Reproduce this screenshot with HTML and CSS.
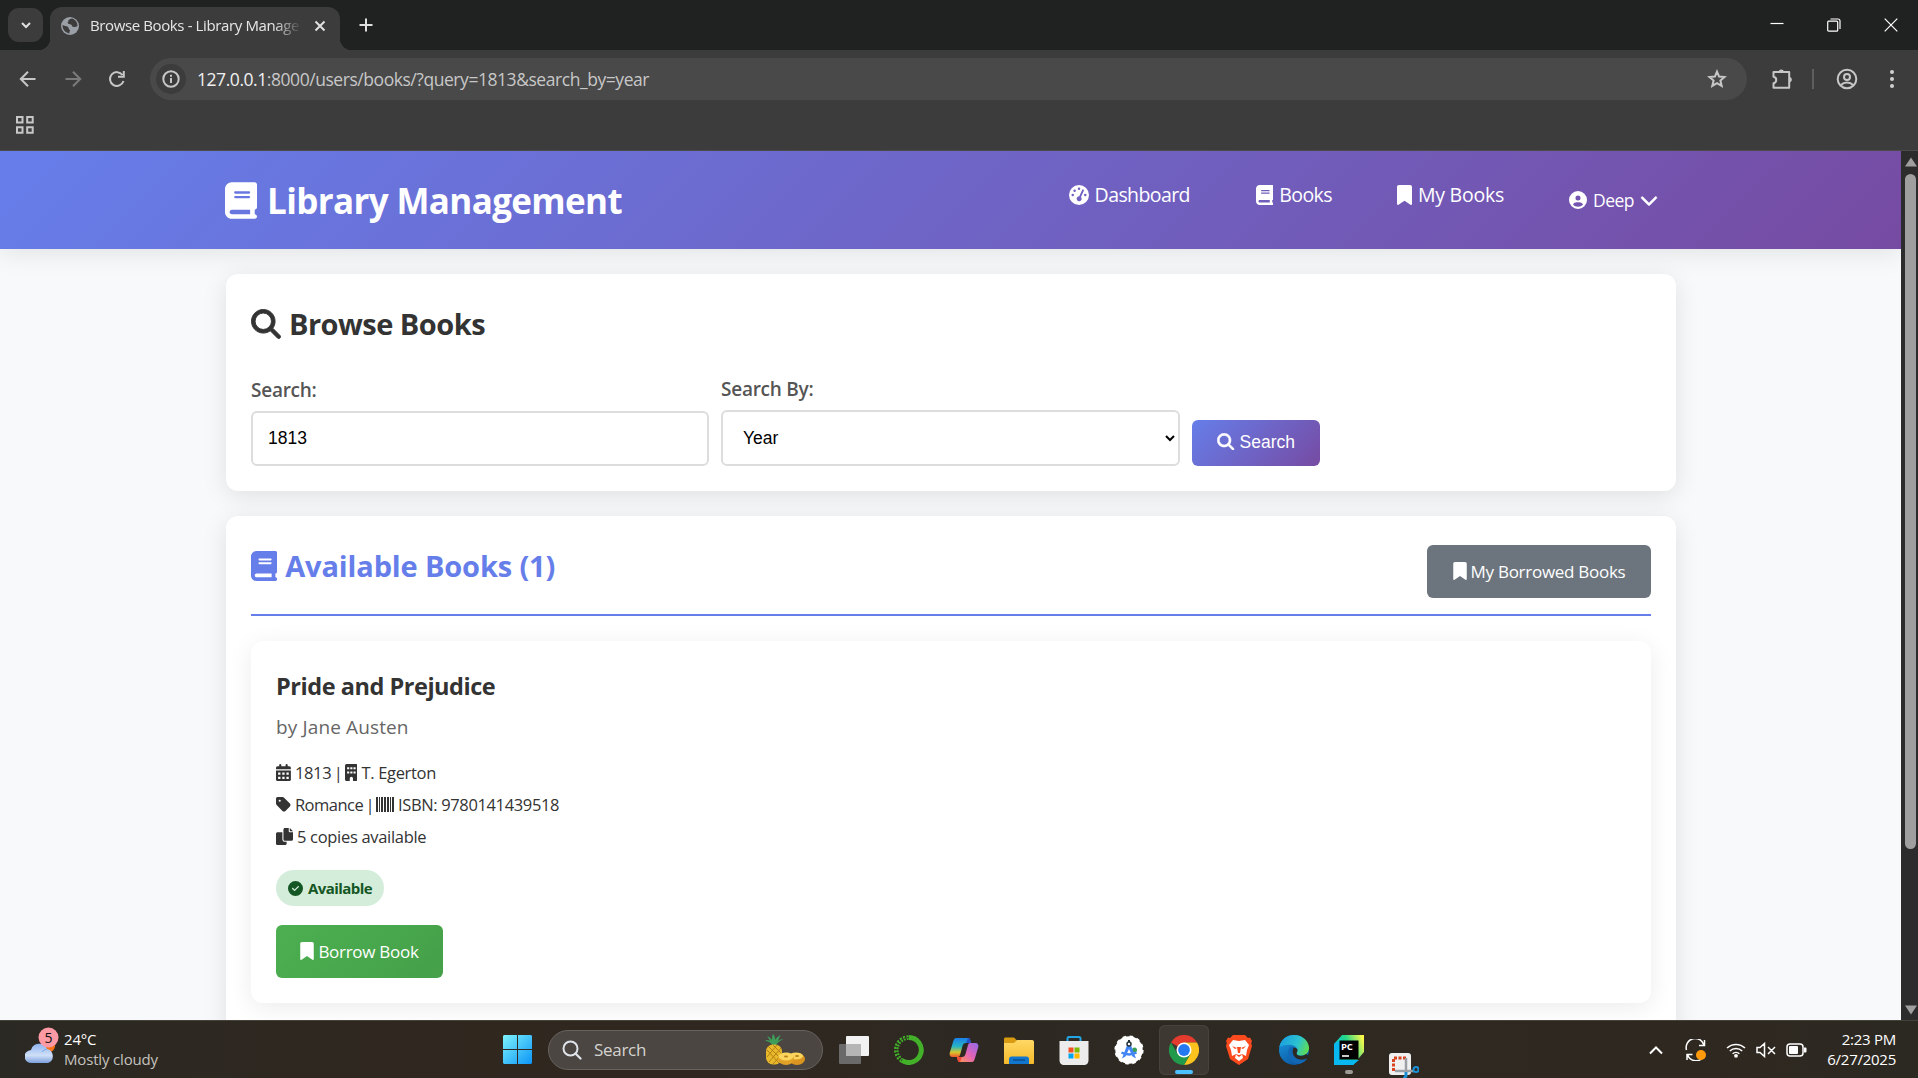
FILE: index.html
```html
<!DOCTYPE html>
<html lang="en">
<head>
<meta charset="utf-8">
<title>Browse Books - Library Management</title>
<link rel="stylesheet" href="styles.css">
</head>
<body>
<svg class="sprite" aria-hidden="true">
  <symbol id="book" viewBox="0 0 448 512"><path d="M96 0C43 0 0 43 0 96V416c0 53 43 96 96 96H384h32c17.7 0 32-14.3 32-32s-14.3-32-32-32V384c17.7 0 32-14.3 32-32V32c0-17.7-14.3-32-32-32H384 96zm0 384H352v64H96c-17.7 0-32-14.3-32-32s14.3-32 32-32zm32-240c0-8.8 7.2-16 16-16H336c8.800 0 16 7.200 16 16s-7.200 16-16 16H144c-8.800 0-16-7.200-16-16zm16 48H336c8.800 0 16 7.200 16 16s-7.200 16-16 16H144c-8.800 0-16-7.200-16-16s7.200-16 16-16z"/></symbol>
  <symbol id="bookmark" viewBox="0 0 384 512"><path d="M0 48V487.700C0 501.100 10.900 512 24.300 512c5 0 9.900-1.500 14-4.400L192 400 345.700 507.600c4.100 2.900 9 4.400 14 4.400c13.400 0 24.300-10.900 24.300-24.300V48c0-26.500-21.500-48-48-48H48C21.500 0 0 21.500 0 48z"/></symbol>
  <symbol id="search" viewBox="-8 -8 528 528"><path stroke="currentColor" stroke-width="16" d="M416 208c0 45.900-14.900 88.300-40 122.700L502.600 457.400c12.500 12.500 12.500 32.800 0 45.300s-32.800 12.500-45.300 0L330.700 376c-34.400 25.200-76.800 40-122.700 40C93.100 416 0 322.900 0 208S93.100 0 208 0S416 93.100 416 208zM208 352a144 144 0 1 0 0-288 144 144 0 1 0 0 288z"/></symbol>
  <symbol id="check" viewBox="0 0 512 512"><path d="M256 512A256 256 0 1 0 256 0a256 256 0 1 0 0 512zM369 209L241 337c-9.400 9.400-24.600 9.400-33.900 0l-64-64c-9.400-9.400-9.400-24.600 0-33.900s24.600-9.400 33.900 0l47 47L335 175c9.400-9.400 24.600-9.400 33.900 0s9.400 24.600 0 33.900z"/></symbol>
  <symbol id="user" viewBox="0 0 512 512"><path d="M399 384.200C376.900 345.800 335.400 320 288 320H224c-47.400 0-88.900 25.800-111 64.200c35.200 39.200 86.200 63.800 143 63.800s107.800-24.700 143-63.800zM0 256a256 256 0 1 1 512 0A256 256 0 1 1 0 256zm256 16a72 72 0 1 0 0-144 72 72 0 1 0 0 144z"/></symbol>
  <symbol id="chevron" viewBox="0 0 512 512"><path stroke="currentColor" stroke-width="14" d="M233.400 406.600c12.500 12.500 32.800 12.500 45.300 0l192-192c12.500-12.500 12.500-32.800 0-45.300s-32.800-12.500-45.300 0L256 338.700 86.600 169.400c-12.500-12.500-32.800-12.500-45.300 0s-12.500 32.800 0 45.300l192 192z"/></symbol>
  <symbol id="tag" viewBox="0 0 448 512"><path d="M0 80V229.500c0 17 6.700 33.300 18.700 45.300l176 176c25 25 65.500 25 90.500 0L418.700 317.300c25-25 25-65.500 0-90.500l-176-176c-12-12-28.300-18.700-45.300-18.700H48C21.500 32 0 53.500 0 80zm112 32a32 32 0 1 1 0 64 32 32 0 1 1 0-64z"/></symbol>
  <symbol id="copy" viewBox="0 0 512 512"><path d="M272 0H384v96c0 17.700 14.300 32 32 32h96V336c0 26.500-21.500 48-48 48H272c-26.500 0-48-21.500-48-48V48c0-26.500 21.500-48 48-48zM416 0l96 96H416zM48 128H192v208c0 44.200 35.800 80 80 80h48v48c0 26.500-21.500 48-48 48H48c-26.500 0-48-21.500-48-48V176c0-26.500 21.500-48 48-48z"/></symbol>
  <symbol id="calendar" viewBox="0 0 448 512"><path fill-rule="evenodd" d="M96 32a32 32 0 0 1 64 0v32h128V32a32 32 0 0 1 64 0v32h48a48 48 0 0 1 48 48v48H0v-48a48 48 0 0 1 48-48h48zM0 192h448v272a48 48 0 0 1-48 48H48a48 48 0 0 1-48-48zM64 256v64h70v-64zM189 256v64h70v-64zM314 256v64h70v-64zM64 384v64h70v-64zM189 384v64h70v-64zM314 384v64h70v-64z"/></symbol>
  <symbol id="building" viewBox="0 0 384 512"><path fill-rule="evenodd" d="M48 0h288a48 48 0 0 1 48 48v416a48 48 0 0 1-48 48h-96v-80a48 48 0 0 0-96 0v80H48a48 48 0 0 1-48-48V48A48 48 0 0 1 48 0zM64 96v64h64V96zM160 96v64h64V96zM256 96v64h64V96zM64 224v64h64v-64zM160 224v64h64v-64zM256 224v64h64v-64z"/></symbol>
  <symbol id="barcode" viewBox="0 0 18 17"><path d="M0 1h2v15H0zM3 1h1v15H3zM5 1h2v15H5zM8 1h2v15H8zM11 1h2v15h-2zM14 1h1v15h-1zM16 1h2v15h-2z"/></symbol>
  <symbol id="gauge" viewBox="0 0 512 512"><path fill-rule="evenodd" d="M256 0a256 256 0 1 1 0 512a256 256 0 1 1 0-512zM256 64a32 32 0 1 0 0 64a32 32 0 1 0 0-64zM144 112a32 32 0 1 0 0 64a32 32 0 1 0 0-64zM96 224a32 32 0 1 0 0 64a32 32 0 1 0 0-64zM416 224a32 32 0 1 0 0 64a32 32 0 1 0 0-64zM381 144a24 24 0 0 0-44-19l-75 163a64 64 0 1 0 44 20z"/></symbol>
</svg>

<header class="browser">
  <div class="tabstrip">
    <button class="tab-menu"><svg width="12" height="12" viewBox="0 0 12 12"><path d="M2 4l4 4 4-4" class="ln w2"/></svg></button>
    <div class="tab">
      <svg class="globe" width="18" height="18" viewBox="0 0 18 18"><circle cx="9" cy="9" r="9" fill="#9aa0a6"/><path d="M11 1.500c-3 .5-4 1.500-3.500 3C6 5 6.500 6.500 8 7c2 .5 3 .5 3 2.500 1.500 0 1.500 1 3 .5 1-.5 2-.5 2.500-1C16.500 5 14 2.200 11 1.500zM1.500 8c1.500 1 4 .8 5.500 2 1 1 .5 2.500 2 3 0 1.500-1 2-.5 3.400C4.500 16 1.400 12.500 1.500 8z" fill="#3c3c3c"/></svg>
      <span class="tab-title">Browse Books - Library Manage</span>
      <svg class="tab-close" width="12" height="12" viewBox="0 0 12 12"><path d="M1.500 1.500l9 9M10.500 1.500l-9 9" class="ln w2"/></svg>
    </div>
    <svg class="plus" width="14" height="14" viewBox="0 0 14 14"><path d="M7 .5v13M.5 7h13" class="ln w2"/></svg>
    <div class="window-buttons">
      <svg width="14" height="14" viewBox="0 0 14 14"><path d="M.5 5.500h13" class="ln wh"/></svg>
      <svg width="14" height="14" viewBox="0 0 14 14"><rect x=".7" y="3.200" width="10" height="10" rx="1" class="ln wh"/><path d="M3.500 1h7.500a2 2 0 0 1 2 2v8" class="ln wh"/></svg>
      <svg width="14" height="14" viewBox="0 0 14 14"><path d="M.7.7l12.600 12.600M13.300.7L.7 13.300" class="ln wh"/></svg>
    </div>
  </div>
  <div class="toolbar">
    <div class="nav-buttons">
      <svg width="18" height="18" viewBox="0 0 18 18"><path d="M16.500 9H2M9 1.800L1.800 9 9 16.200" class="ln w2"/></svg>
      <svg class="dim" width="18" height="18" viewBox="0 0 18 18"><path d="M1.500 9H16M9 1.800L16.200 9 9 16.200" class="ln w2"/></svg>
      <svg width="18" height="18" viewBox="0 0 18 18"><path d="M15.500 11A6.900 6.900 0 1 1 14.500 5M15.800 1v5.800H10" class="ln w2"/></svg>
    </div>
    <div class="omnibox">
      <span class="site-info"><svg width="18" height="18" viewBox="0 0 18 18"><circle cx="9" cy="9" r="7.700" class="ln w2"/><path d="M9 8v5M9 4.800v1.900" class="ln w2"/></svg></span>
      <span class="url"><b>127.0.0.1</b>:8000/users/books/?query=1813&amp;search_by=year</span>
      <svg class="star" width="20" height="20" viewBox="0 0 20 20"><path d="M10 2.600l2.100 5 5.400.5-4.100 3.500 1.300 5.300-4.700-2.800-4.700 2.800 1.300-5.300L2.500 8.100l5.400-.5z" class="ln w2"/></svg>
    </div>
    <svg class="ext" width="22" height="22" viewBox="0 0 22 22"><path d="M2.500 4h15.700v15.700H2.500v-4.500a3.300 3.300 0 0 0 0-6.500z" class="ln w2" stroke-linejoin="round"/><path d="M7.700 4a2.600 2.600 0 0 1 5.200 0zM18.200 9a2.600 2.600 0 0 1 0 5.200z" fill="#c7c7c7"/></svg>
    <i class="sep"></i>
    <svg class="profile" width="22" height="22" viewBox="0 0 22 22"><circle cx="11" cy="11" r="9.300" class="ln w2"/><circle cx="11" cy="9" r="3" class="ln w2"/><path d="M5 17c3-3.300 9-3.300 12 0" class="ln w2"/></svg>
    <svg class="dots" width="6" height="20" viewBox="0 0 6 20"><g fill="#d0d0d0"><circle cx="3" cy="3" r="2"/><circle cx="3" cy="10" r="2"/><circle cx="3" cy="17" r="2"/></g></svg>
  </div>
  <div class="bookmarks"><svg width="20" height="20" viewBox="0 0 20 20"><path d="M2 2h5.500v5.500H2zM12.200 2h5.500v5.500h-5.500zM2 12.200h5.500v5.500H2zM12.200 12.200h5.500v5.500h-5.500z" class="ln w2"/></svg></div>
</header>

<div class="viewport">
  <div class="page">
    <div class="site-header">
      <div class="brand"><svg class="ic"><use href="#book"/></svg>Library Management</div>
      <nav class="menu">
        <a class="link dashboard"><svg class="ic sq"><use href="#gauge"/></svg>Dashboard</a>
        <a class="link books"><svg class="ic"><use href="#book"/></svg>Books</a>
        <a class="link mine"><svg class="ic bm"><use href="#bookmark"/></svg>My Books</a>
        <a class="link account"><svg class="ic sq"><use href="#user"/></svg>Deep<svg class="ic sq"><use href="#chevron"/></svg></a>
      </nav>
    </div>
    <main class="container">
      <section class="card search-card">
        <h2 class="heading"><svg class="ic sq"><use href="#search"/></svg>Browse Books</h2>
        <form class="search-form">
          <label class="field"><span class="label">Search:</span><input type="text" value="1813"></label>
          <label class="field by"><span class="label">Search By:</span><select><option>Year</option></select></label>
          <button type="button" class="btn-search"><svg class="ic sq"><use href="#search"/></svg>Search</button>
        </form>
      </section>
      <section class="card list-card">
        <div class="list-head">
          <h3 class="list-title"><svg class="ic"><use href="#book"/></svg>Available Books (1)</h3>
          <a class="btn btn-gray"><svg class="ic bm"><use href="#bookmark"/></svg>My Borrowed Books</a>
        </div>
        <article class="book">
          <h4 class="book-title">Pride and Prejudice</h4>
          <p class="author">by Jane Austen</p>
          <div class="meta">
            <p><svg class="ic"><use href="#calendar"/></svg><span>1813 <i class="bar">|</i></span><svg class="ic bm"><use href="#building"/></svg><span>T. Egerton</span></p>
            <p><svg class="ic"><use href="#tag"/></svg><span class="genre">Romance <i class="bar">|</i></span><svg class="ic barcode"><use href="#barcode"/></svg><span class="isbn">ISBN: 9780141439518</span></p>
            <p><svg class="ic sq"><use href="#copy"/></svg><span>5 copies available</span></p>
          </div>
          <span class="badge"><svg class="ic sq"><use href="#check"/></svg>Available</span>
          <a class="btn btn-green"><svg class="ic bm"><use href="#bookmark"/></svg>Borrow Book</a>
        </article>
      </section>
    </main>
  </div>
  <div class="scrollbar">
    <svg width="14" height="10" viewBox="0 0 14 10"><path d="M7 .5l6 9H1z"/></svg>
    <i class="thumb"></i>
    <svg class="down" width="14" height="10" viewBox="0 0 14 10"><path d="M7 9.500l6-9H1z"/></svg>
  </div>
</div>

<footer class="taskbar">
  <div class="weather">
    <svg width="34" height="40" viewBox="0 0 34 40"><defs><linearGradient id="cl" x1="0" y1="0" x2="0" y2="1"><stop offset="0" stop-color="#8fb4f0"/><stop offset=".6" stop-color="#cfe0f8"/><stop offset="1" stop-color="#7d9fdc"/></linearGradient></defs><circle cx="24" cy="19" r="6" fill="#f97316"/><path d="M7 36a7 6.500 0 0 1-1-13 8.500 8.500 0 0 1 16-1 7.300 7.300 0 0 1 1 14z" fill="url(#cl)"/><path d="M17 25a8 8 0 0 1 5-3" stroke="#7fa5e6" fill="none"/><circle cx="23.500" cy="10.500" r="10" fill="#ff99a4"/><text x="23.500" y="15.500" text-anchor="middle" font-size="14" fill="#111">5</text></svg>
    <div class="two"><div>24°C</div><div class="soft">Mostly cloudy</div></div>
  </div>
  <div class="dock">
    <svg class="start" width="29" height="29" viewBox="0 0 29 29"><defs><linearGradient id="wn" x1="0" y1="0" x2="1" y2="1"><stop offset="0" stop-color="#7df3fc"/><stop offset="1" stop-color="#0c95f6"/></linearGradient></defs><path d="M1 0h13v14H0V1zM15 0h13l1 1v13H15zM0 15h14v14H1l-1-1zM15 15h14v13l-1 1H15z" fill="url(#wn)"/></svg>
    <div class="task-search">
      <svg width="20" height="20" viewBox="0 0 20 20"><circle cx="8.500" cy="8.500" r="7" fill="none" stroke="#dfe3ea" stroke-width="2"/><path d="M13.500 13.500l5 5" stroke="#dfe3ea" stroke-width="2.300" stroke-linecap="round"/></svg>
      <span>Search</span>
      <svg class="fruit" width="42" height="32" viewBox="0 0 42 32"><path d="M9 12C7 8 4 8 1 6c3 0 4 0 5 1C5 5 4 3 3 2c3 1 4 3 5 4 0-2 0-4 1-6 2 2 2 4 2 6 1-2 3-4 6-5-2 2-2 4-3 6 1-1 3-2 5-2-2 2-5 2-7 7z" fill="#3f9d5a"/><rect x="2" y="10.500" width="16" height="20" rx="7" fill="#e9b92c"/><path d="M3 16l12 13M4 12l13 13M9 11l9 9M17 14L5 28M13 11L3 23M18 20l-9 10" stroke="#b47f14" stroke-width="1"/><ellipse cx="33" cy="25" rx="8" ry="6" fill="#d99520"/><ellipse cx="32" cy="22" rx="7" ry="3.500" fill="#fbd55c"/><ellipse cx="22" cy="25" rx="8" ry="6" fill="#e0a126"/><ellipse cx="22" cy="22.500" rx="7.500" ry="4" fill="#fbd55c"/><ellipse cx="22" cy="22.500" rx="2" ry="1" fill="#b8801b"/><ellipse cx="33" cy="22" rx="2" ry="1" fill="#b8801b"/></svg>
    </div>
    <div class="apps">
      <span class="app"><svg width="30" height="30" viewBox="0 0 30 30"><rect x="0" y="9" width="22" height="20" rx="1" fill="#6a6a6a"/><rect x="7" y="1" width="23" height="20" rx="1" fill="#f2f2f2"/><path d="M7 9h15v12H7z" fill="#b5b5b5"/></svg></span>
      <span class="app"><svg width="30" height="30" viewBox="0 0 30 30"><path d="M15 2.500a12.500 12.500 0 1 1-7 23" fill="none" stroke="#43b02a" stroke-width="5"/><path d="M8 25.500A12.500 12.500 0 0 1 15 2.500" fill="none" stroke="#43b02a" stroke-width="4.500" stroke-dasharray="2 1.300"/><path d="M8 25.500A12.500 12.500 0 0 1 15 2.500" fill="none" stroke="#2d2822" stroke-width="1" stroke-dasharray="1.500 1.500"/></svg></span>
      <span class="app"><svg width="30" height="30" viewBox="0 0 30 30"><defs><linearGradient id="c1" x1="0" y1="0" x2="0" y2="1"><stop offset="0" stop-color="#1b7fe8"/><stop offset=".45" stop-color="#27b5c4"/><stop offset=".75" stop-color="#d4c92c"/><stop offset="1" stop-color="#f3562e"/></linearGradient><linearGradient id="c2" x1="1" y1="0" x2="0" y2="1"><stop offset="0" stop-color="#8d6be8"/><stop offset=".5" stop-color="#e263b9"/><stop offset="1" stop-color="#ff9a4a"/></linearGradient></defs><path d="M7 3h12c2 0 2 1 3 5h-5c-2 0-3 1-3.500 3L11 20c-.7 2-1.500 2-4 2H4c-3 0-4-2-3-5l3-10c1-3 1.500-4 3-4z" fill="url(#c1)"/><path d="M23 27H11c-2 0-2-1-3-5h5c2 0 3-1 3.500-3L19 10c.7-2 1.500-2 4-2h3c3 0 4 2 3 5l-3 10c-1 3-1.500 4-3 4z" fill="url(#c2)"/><path d="M19 3c2 0 2 1 3 5h-5z" fill="#2650c8"/><path d="M8 22h5l-2 5c-2 0-2-1-3-5z" fill="#f04a37"/></svg></span>
      <span class="app"><svg width="30" height="30" viewBox="0 0 30 30"><defs><linearGradient id="fo" x1="0" y1="0" x2="0" y2="1"><stop offset="0" stop-color="#ffd865"/><stop offset="1" stop-color="#f5b92a"/></linearGradient></defs><path d="M0 4c0-1 .5-1.500 1.500-1.500H10l3 3v6H0z" fill="#d99b11"/><path d="M0 8h10l3-3h15c1.300 0 2 .7 2 2v21c0 .6-.4 1-1 1H1c-.6 0-1-.4-1-1z" fill="url(#fo)"/><path d="M5 29v-5c0-1.500 1-2.500 2.500-2.500h15c1.500 0 2.500 1 2.500 2.500v5z" fill="#1277cc"/><path d="M9 25h12" stroke="#0b4f92" stroke-width="1.500"/></svg></span>
      <span class="app"><svg width="30" height="30" viewBox="0 0 30 30"><path d="M8.500 6V3.500C8.500 2.500 9 2 10 2h10c1 0 1.500.5 1.500 1.500V6" fill="none" stroke="#22a5e4" stroke-width="2"/><path d="M.5 6h29v19c0 3-1.500 5-5 5h-19c-3.500 0-5-2-5-5z" fill="#ececec"/><path d="M9.500 12.500h5v5h-5z" fill="#f25022"/><path d="M15.500 12.500h5v5h-5z" fill="#7fba00"/><path d="M9.500 18.500h5v5h-5z" fill="#00a4ef"/><path d="M15.500 18.500h5v5h-5z" fill="#ffb900"/></svg></span>
      <span class="app"><svg width="30" height="30" viewBox="0 0 30 30"><circle cx="15" cy="15" r="13.700" fill="#fff"/><circle cx="15" cy="15" r="13.700" fill="none" stroke="#fff" stroke-width="1.800" stroke-dasharray="3.600 3.600"/><circle cx="20.500" cy="15" r="2.500" fill="#3a9e56"/><path d="M13.500 9h3l5.500 14.500-3.500-2L15 14l-3.500 7.500-3.500 2z" fill="#4285f4"/><path d="M7.500 17.500c4 2.500 11 2.500 15 0" fill="none" stroke="#4285f4" stroke-width="2.500"/><circle cx="15" cy="9" r="2" fill="#fff" stroke="#263238" stroke-width="1.500"/><path d="M15 5v2" stroke="#263238" stroke-width="2"/></svg></span>
      <span class="app active"><svg width="30" height="30" viewBox="0 0 30 30"><path d="M15 15L2 7.500A15 15 0 0 1 28 7.500H15z" fill="#e33b2e"/><path d="M15 15V7.500h13A15 15 0 0 1 15 30l6.500-11.200z" fill="#fcc31e"/><path d="M15 15l6.500 3.800L15 30A15 15 0 0 1 2 7.500l6.500 11.300z" fill="#219a4b"/><circle cx="15" cy="15" r="7.500" fill="#fff"/><circle cx="15" cy="15" r="5.900" fill="#2478f2"/></svg><i class="run"></i></span>
      <span class="app"><svg width="30" height="30" viewBox="0 0 30 30"><path d="M9 0h12l3 3 2-.5L28 6l-.8 2 .8 3-4 13-9 6-9-6L2 11l.8-3L2 6l2-3.500 2 .5z" fill="#fb4a1d"/><path d="M9 5l6 1 6-1 4 5-2 5-1 6-4-2 1 4-4 3-4-3 1-4-4 2-1-6-2-5z" fill="#fff"/><path d="M8 11l5 2-2 1zM22 11l-5 2 2 1zM13 12h4l-1 6h-2zM11 19l4 3 4-3-4 1z" fill="#fb4a1d"/></svg></span>
      <span class="app"><svg width="30" height="30" viewBox="0 0 30 30"><defs><linearGradient id="e1" x1="0" y1=".3" x2="1" y2=".6"><stop offset="0" stop-color="#1a9fe0"/><stop offset=".6" stop-color="#2cc3cf"/><stop offset="1" stop-color="#5fdc52"/></linearGradient><linearGradient id="e2" x1="0" y1="0" x2=".5" y2="1"><stop offset="0" stop-color="#1b9de2"/><stop offset="1" stop-color="#0c59a4"/></linearGradient></defs><circle cx="15" cy="15" r="15" fill="url(#e2)"/><path d="M.3 12C2 4 8 0 15 0c9 0 15 6.500 15 13 0 5-4 7.500-8 7.500-3 0-5-1-4-3 1-1 1-6-5-7.500C8 9 2.500 11 .3 12z" fill="url(#e1)"/><path d="M12 14c-2 6 2 12 9 12 3 0 5-.7 7-2l1.500-3-2-2c-4 3-10 2.500-10-1 0-1 1-1.500 1-3 0-2-5-4-6.500-1z" fill="#2d2822"/><path d="M11 12c-4 5-1 16 9 17 4-1 7-3 8.500-6-3 2-8 2.500-11.500 0-4-3-4-8-2-11z" fill="#1268b5"/></svg></span>
      <span class="app"><svg width="30" height="30" viewBox="0 0 30 30"><defs><linearGradient id="pc" x1="0" y1=".6" x2="1" y2=".2"><stop offset="0" stop-color="#07c3f2"/><stop offset=".5" stop-color="#21d789"/><stop offset="1" stop-color="#fcf84a"/></linearGradient></defs><path d="M8 0h22v17L19 30H0V9z" fill="url(#pc)"/><path d="M0 9l6-3v19h19l-6 5H0z" fill="#07b9f0"/><path d="M5.500 5.500h19v19h-19z" fill="#000"/><path d="M8 21h7" stroke="#fff" stroke-width="1.600"/><text x="7" y="14.500" font-size="9.500" font-weight="700" fill="#fff">PC</text></svg><i class="idle"></i></span>
      <span class="app low"><svg width="30" height="30" viewBox="0 0 30 30"><rect x="0" y="0" width="22" height="22" rx="3" fill="#f0f0f0"/><path d="M4.500 18V5H17" fill="none" stroke="#d9431f" stroke-width="3" stroke-dasharray="3 1.500"/><path d="M17 5v13M6 18h19" stroke="#9aa0a6" stroke-width="2.500"/><circle cx="27" cy="16.500" r="2.500" fill="none" stroke="#1b8fd6" stroke-width="2"/><path d="M17 19v4l-3 4" stroke="#1b8fd6" stroke-width="3" fill="none"/></svg></span>
    </div>
  </div>
  <div class="tray">
    <svg width="16" height="10" viewBox="0 0 16 10"><path d="M2 8.500l6-6 6 6" class="ln wt"/></svg>
    <svg class="sync" width="22" height="22" viewBox="0 0 22 22"><path d="M1.500 11A9 9 0 0 1 19 6M19.500 1v5.500H14M19 17A9 9 0 0 1 2.500 15.500M2 21v-5.500h5.500" class="ln ws"/><circle cx="16" cy="16" r="5" fill="#ff9a0c"/></svg>
    <svg class="wifi" width="20" height="16" viewBox="0 0 20 16"><path d="M1 6a13 13 0 0 1 18 0M3.800 9a9 9 0 0 1 12.400 0M6.600 11.800a5 5 0 0 1 6.800 0" class="ln ws"/><circle cx="10" cy="13.800" r="1.900" fill="#fff"/></svg>
    <svg class="vol" width="20" height="16" viewBox="0 0 20 16"><path d="M1 5.500h3L8.500 1.500v13L4 10.500H1zM12 5l7 7M19 5l-7 7" class="ln ws"/></svg>
    <svg class="bat" width="21" height="14" viewBox="0 0 21 14"><rect x="1" y="1" width="16" height="12" rx="3" class="ln ws"/><rect x="3" y="3" width="9" height="8" rx="1" fill="#fff"/><path d="M18 4.500h1.500c.6 0 1 .5 1 1v3c0 .5-.4 1-1 1H18z" fill="#fff"/></svg>
    <div class="clock"><div>2:23 PM</div><div>6/27/2025</div></div>
  </div>
</footer>
</body>
</html>
```

FILE: styles.css
```css
* { box-sizing: border-box; }
html, body { margin: 0; height: 100%; overflow: hidden; }
body { display: flex; flex-direction: column; width: 1918px; height: 1078px; font-family: "Open Sans", "Noto Sans", sans-serif; color: #333; white-space: nowrap; }
h2, h3, h4, p { margin: 0; }
svg { display: block; flex: none; }
.sprite { position: absolute; width: 0; height: 0; }
.ln { fill: none; stroke: #c7c7c7; stroke-width: 1.5; }
.ln.w2 { stroke-width: 2; }
.ln.wh { stroke: #fff; stroke-width: 1.2; }
.ln.ws { stroke: #fff; stroke-width: 1.5; }
.ln.wt { stroke: #fff; stroke-width: 2; }
.ic { width: .875em; height: 1em; fill: currentColor; }
.ic.sq { width: 1em; }
.ic.bm { width: .75em; }

/* browser chrome */
.browser { flex: none; height: 151px; background: #3c3c3c; border-bottom: 1px solid #4b4b4b; }
.tabstrip { display: flex; height: 50px; padding: 7px 0 0 8px; background: #202221; }
.tab-menu { display: grid; place-items: center; width: 35px; height: 34px; margin: 1px 7px 0 0; padding: 0; border: 0; border-radius: 11px; background: #3c3c3c; }
.tab { position: relative; display: flex; align-items: center; width: 290px; height: 43px; padding: 0 14px 6px 11px; border-radius: 12px 12px 0 0; background: #3c3c3c; }
.tab::before, .tab::after { content: ""; position: absolute; bottom: 0; width: 12px; height: 12px; }
.tab::before { left: -12px; background: radial-gradient(circle at 0 0, transparent 12px, #3c3c3c 12.5px); }
.tab::after { right: -12px; background: radial-gradient(circle at 100% 0, transparent 12px, #3c3c3c 12.5px); }
.tab-title { width: 212px; margin: -1px 0 0 11px; overflow: hidden; font-size: 15px; letter-spacing: -.38px; color: #e6e6e6; mask-image: linear-gradient(90deg, #000 184px, transparent 212px); }
.tab-close { margin-left: auto; }
.tab-close .ln, .tab-menu .ln, .plus .ln { stroke: #e0e0e0; }
.plus { margin: 11px 0 0 19px; }
.window-buttons { display: flex; gap: 43px; margin: 11px 20px 0 auto; }
.toolbar { display: flex; align-items: center; height: 58px; }
.nav-buttons { display: flex; gap: 26.5px; width: 150px; padding-left: 19px; }
.dim { opacity: .45; }
.omnibox { display: flex; align-items: center; width: 1597px; height: 42px; padding: 0 20px 0 6px; border-radius: 21px; background: #494949; }
.site-info { display: grid; place-items: center; width: 30px; height: 30px; border-radius: 50%; background: #3c3c3c; }
.url { margin-left: 11px; font-size: 17.5px; letter-spacing: -.447px; color: #c7c7c7; }
.url b { font-weight: 400; color: #f0f0f0; }
.star { margin-left: auto; }
.ext { margin-left: 24px; }
.sep { width: 2px; height: 20px; margin-left: 19px; background: #5e5e5e; }
.profile { margin-left: 22px; }
.dots { margin-left: 31px; }
.bookmarks { padding: 7px 0 0 15px; }

/* page */
.viewport { display: flex; flex: none; height: 869px; overflow: hidden; }
.page { width: 1901px; background: #f8f9fa; }
.site-header { display: flex; align-items: center; height: 98px; padding: 0 243px 0 225px; background: linear-gradient(135deg, #667eea 0%, #764ba2 100%); box-shadow: 0 3px 25px rgba(0, 0, 0, .1); color: #fff; }
.brand { display: flex; align-items: center; gap: 10px; font-size: 35px; font-weight: 700; letter-spacing: -.64px; }
.brand .ic { width: 32px; height: 37px; }
.menu { display: flex; align-items: center; margin-left: auto; }
.link { display: flex; align-items: center; gap: 6px; padding-bottom: 11px; font-size: 19.5px; letter-spacing: -.6px; }
.link .ic { font-size: 20px; }
.books { margin-left: 66px; }
.mine { margin-left: 65px; letter-spacing: -.25px; }
.account { margin-left: 65px; padding: 0; font-size: 17.5px; letter-spacing: -.5px; }
.account .ic { font-size: 18px; }
.container { width: 1450px; margin: 25px 0 0 226px; }
.card { padding: 25px; border-radius: 12px; background: #fff; box-shadow: 0 5px 25px rgba(0, 0, 0, .1); }
.search-card { height: 217px; margin-bottom: 25px; }
.heading { display: flex; align-items: center; gap: 8px; height: 48px; margin-bottom: 27px; font-size: 29px; font-weight: 700; letter-spacing: -.52px; }
.heading .ic { margin-top: 1px; font-size: 30px; }
.search-form { display: flex; align-items: flex-end; gap: 12px; }
.field { display: block; width: 458px; }
.field.by { width: 459px; }
.label { display: block; height: 28px; margin-bottom: 8px; line-height: 30px; font-size: 19px; font-weight: 600; letter-spacing: -.25px; color: #555; }
.field input, .field select { display: block; width: 100%; height: 55px; padding: 0 15px; border: 2px solid #ddd; border-radius: 6px; background: #fff; color: #000; font: 17.5px "Liberation Sans", Arial, sans-serif; }
.field select { height: 56px; padding: 0 1px 0 16px; }
.btn-search { display: flex; align-items: center; justify-content: center; gap: 5px; width: 128px; height: 46px; padding: 0 0 1px; border: 0; border-radius: 6px; background: linear-gradient(135deg, #667eea, #764ba2); color: #fff; font: 17.5px "Liberation Sans", Arial, sans-serif; }
.btn-search .ic { margin-bottom: 2px; }
.list-card { height: 600px; }
.list-head { display: flex; align-items: flex-start; justify-content: space-between; height: 75px; margin-bottom: 25px; padding-top: 4px; border-bottom: 2px solid #667eea; }
.list-title { display: flex; align-items: center; gap: 8px; height: 41px; color: #667eea; font-size: 29px; font-weight: 700; letter-spacing: -.141px; }
.list-title .ic { font-size: 30px; }
.btn { display: flex; align-items: center; justify-content: center; gap: 4px; height: 53px; padding-bottom: 1px; border-radius: 6px; color: #fff; font-size: 17px; letter-spacing: -.28px; }
.btn .ic { width: 14px; height: 18px; }
.btn-gray { width: 224px; background: #6c757d; }
.btn-green { width: 167px; background: linear-gradient(135deg, #4caf50, #45a049); }
.book { height: 362px; padding: 25px; border-radius: 12px; box-shadow: 0 5px 25px rgba(0, 0, 0, .08); }
.book-title { height: 40px; line-height: 40px; font-size: 23.5px; font-weight: 700; letter-spacing: -.46px; }
.author { height: 41px; line-height: 42px; color: #666; font-size: 19px; letter-spacing: .13px; }
.meta { margin: 9px 0 18px; font-size: 16.5px; letter-spacing: -.31px; }
.meta p { display: flex; align-items: center; gap: 4px; height: 32px; }
.meta .ic { font-size: 17px; }
.meta .ic.barcode { width: 18px; height: 17px; shape-rendering: crispEdges; }
.genre { letter-spacing: -.5px; }
.isbn { letter-spacing: -.37px; }
.bar { margin: 0 -2px 0 -1.5px; font-style: normal; }
.badge { display: flex; align-items: center; justify-content: center; gap: 5px; width: 108px; height: 36px; margin-bottom: 19px; border-radius: 18px; background: #d4edda; color: #155724; font-size: 15px; font-weight: 700; letter-spacing: -.566px; }
.scrollbar { display: flex; flex-direction: column; align-items: center; width: 17px; padding: 6px 0 5px 2px; background: #2c2c2c; fill: #9f9f9f; }
.thumb { width: 11px; height: 675px; margin-top: 7px; border-radius: 6px; background: #9f9f9f; }
.down { margin-top: auto; }

/* taskbar */
.taskbar { display: flex; flex: none; height: 58px; border-top: 1px solid #454239; background: linear-gradient(90deg, #2b2923, #30271f 25%, #302720 38%, #2d2922 50%, #2f2820 90%, #2b2922); color: #fff; font-size: 15px; letter-spacing: -.17px; overflow: hidden; }
.weather { display: flex; width: 503px; padding: 6px 0 0 25px; gap: 5px; line-height: 20px; }
.two { padding-top: 2px; }
.soft { color: #c5c2be; }
.dock { display: flex; align-items: center; }
.start { margin-right: 16px; }
.task-search { display: flex; align-items: center; width: 275px; height: 40px; padding: 0 16px 0 13px; border: 1px solid #67625e; border-radius: 20px; background: #4b4641; color: #d5d3d0; font-size: 17px; letter-spacing: -.3px; }
.task-search span { margin-left: 12px; }
.fruit { margin-left: auto; }
.apps { display: flex; margin-left: 3px; }
.app { position: relative; display: grid; place-items: center; width: 55px; height: 50px; }
.active { width: 50px; margin: 0 2.5px; border-radius: 6px; background: #3d3832; box-shadow: inset 0 0 0 1px #47423c; }
.run, .idle { position: absolute; bottom: 1px; width: 18px; height: 4px; border-radius: 2px; background: #4cc2ff; }
.idle { width: 8px; background: #9d9a96; }
.low svg { margin-top: 28px; }
.tray { display: flex; align-items: center; margin: 0 22px 0 auto; }
.sync { margin-left: 21px; }
.wifi { margin-left: 19px; }
.vol { margin-left: 10px; }
.bat { margin-left: 10px; }
.clock { width: 89px; height: 57px; padding-top: 8px; line-height: 20px; letter-spacing: -.26px; text-align: right; }
```
